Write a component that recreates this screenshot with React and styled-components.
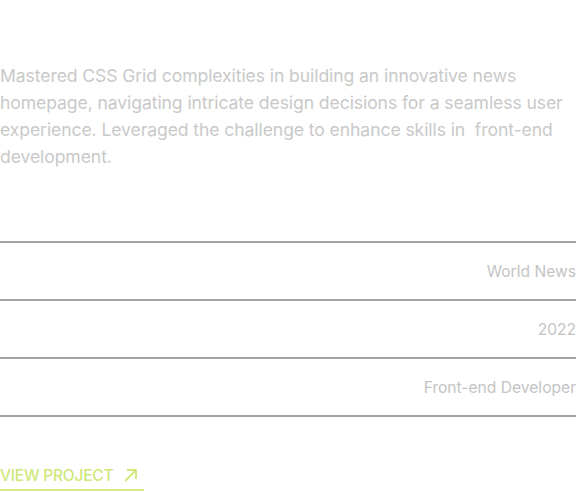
import React from "react";
import styled, { createGlobalStyle } from "styled-components";

const GlobalStyle = createGlobalStyle`
  html, body {
    margin: 0;
    padding: 0;
    background: #ffffff;
  }
  body {
    font-family: Inter, "Noto Sans", sans-serif;
  }
`;

const Wrapper = styled.section`
  width: 576px;
  padding-top: 62px;
  box-sizing: border-box;
`;

const Description = styled.p`
  margin: 0;
  font-size: 17.6px;
  line-height: 27px;
  color: #c9c9c9;
  font-weight: 400;
  letter-spacing: -0.1px;
`;

const InfoList = styled.ul`
  list-style: none;
  margin: 71px 0 0;
  padding: 0;
  border-bottom: 2px solid #a3a3a3;
`;

const InfoRow = styled.li`
  display: flex;
  align-items: center;
  justify-content: flex-end;
  height: 56px;
  border-top: 2px solid #a3a3a3;
  font-size: 15.6px;
  color: #c4c4c4;
`;

const ViewLink = styled.a`
  display: inline-flex;
  align-items: center;
  gap: 10px;
  margin-top: 49px;
  padding: 0 6px 4px 0;
  border-bottom: 2px solid #d6ec8a;
  color: #cfe879;
  font-size: 15.5px;
  font-weight: 500;
  text-transform: uppercase;
  text-decoration: none;
  letter-spacing: -0.2px;
`;

const Arrow = () => (
  <svg width="15" height="15" viewBox="0 0 15 15" fill="none">
    <path d="M2 13 L13 2 M4 2 H13 V11" stroke="#cfe879" strokeWidth="1.8" />
  </svg>
);

const App = () => {
  const info = ["World News", "2022", "Front-end Developer"];

  return (
    <Wrapper>
      <GlobalStyle />
      <Description>
        Mastered CSS Grid complexities in building an innovative news homepage,
        navigating intricate design decisions for a seamless user experience.
        Leveraged the challenge to enhance skills in&nbsp; front-end development.
      </Description>
      <InfoList>
        {info.map((item) => (
          <InfoRow key={item}>{item}</InfoRow>
        ))}
      </InfoList>
      <ViewLink href="#">
        View Project <Arrow />
      </ViewLink>
    </Wrapper>
  );
};

export default App;
